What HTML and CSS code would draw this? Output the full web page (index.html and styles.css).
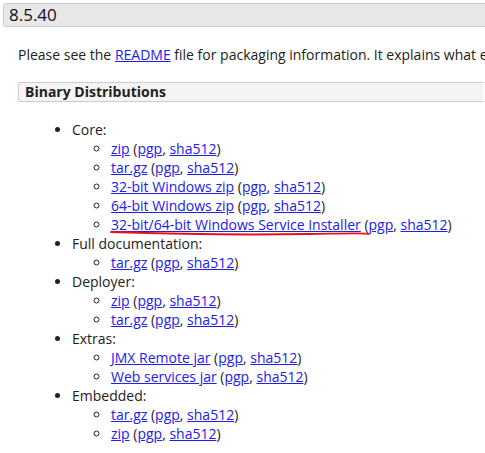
FILE: index.html
```html
<!DOCTYPE html>
<html>
<head>
<meta charset="utf-8">
<link rel="stylesheet" href="styles.css">
</head>
<body>
<div class="page">
  <h3 class="version">8.5.40</h3>
  <div class="section">
    <p class="intro">Please see the <a href="#">README</a> file for packaging information. It explains what every distribution contains.</p>
    <h4 class="subhead">Binary Distributions</h4>
    <ul class="dist">
      <li>Core:
        <ul>
          <li><a href="#">zip</a> (<a href="#">pgp</a>, <a href="#">sha512</a>)</li>
          <li><a href="#">tar.gz</a> (<a href="#">pgp</a>, <a href="#">sha512</a>)</li>
          <li><a href="#">32-bit Windows zip</a> (<a href="#">pgp</a>, <a href="#">sha512</a>)</li>
          <li><a href="#">64-bit Windows zip</a> (<a href="#">pgp</a>, <a href="#">sha512</a>)</li>
          <li class="marked"><a href="#">32-bit/64-bit Windows Service Installer</a> (<a href="#">pgp</a>, <a href="#">sha512</a>)
            <svg class="scribble" width="262" height="8" viewBox="0 0 262 8"><path d="M1 3 C 60 5, 140 6, 200 5 S 250 4, 259 5" fill="none" stroke="#e8101c" stroke-width="1.8" stroke-linecap="round"/></svg>
          </li>
        </ul>
      </li>
      <li>Full documentation:
        <ul>
          <li><a href="#">tar.gz</a> (<a href="#">pgp</a>, <a href="#">sha512</a>)</li>
        </ul>
      </li>
      <li>Deployer:
        <ul>
          <li><a href="#">zip</a> (<a href="#">pgp</a>, <a href="#">sha512</a>)</li>
          <li><a href="#">tar.gz</a> (<a href="#">pgp</a>, <a href="#">sha512</a>)</li>
        </ul>
      </li>
      <li>Extras:
        <ul>
          <li><a href="#">JMX Remote jar</a> (<a href="#">pgp</a>, <a href="#">sha512</a>)</li>
          <li><a href="#">Web services jar</a> (<a href="#">pgp</a>, <a href="#">sha512</a>)</li>
        </ul>
      </li>
      <li>Embedded:
        <ul>
          <li><a href="#">tar.gz</a> (<a href="#">pgp</a>, <a href="#">sha512</a>)</li>
          <li><a href="#">zip</a> (<a href="#">pgp</a>, <a href="#">sha512</a>)</li>
        </ul>
      </li>
    </ul>
  </div>
</div>
</body>
</html>
```
FILE: styles.css
```css
html, body {
  margin: 0;
  padding: 0;
  background: #fff;
  overflow: hidden;
}
body {
  font-family: "Open Sans", "Noto Sans", sans-serif;
  font-size: 14px;
  color: #222;
}
.page {
  padding: 3px 0 0 3px;
  width: 560px;
}
.version {
  margin: 0;
  font-size: 17px;
  font-weight: 400;
  color: #111;
  background: #e8e8e8;
  border: 1px solid #ccc;
  border-radius: 3px 0 0 3px;
  padding: 0 0 0 5px;
  line-height: 22px;
  height: 22px;
}
.section {
  padding-left: 15px;
}
.intro {
  margin: 18px 0 0 0;
  white-space: nowrap;
}
a {
  color: #2020ee;
  text-decoration: underline;
}
.subhead {
  margin: 18px 0 0 0;
  width: 465px;
  box-sizing: border-box;
  font-size: 14px;
  font-weight: 700;
  color: #222;
  background: #f4f4f4;
  border: 1px solid #ccc;
  border-right: none;
  border-radius: 3px 0 0 3px;
  padding: 0 0 0 6px;
  line-height: 18px;
}
.dist {
  margin: 18px 0 0 0;
  padding-left: 54px;
  list-style: disc;
}
.dist ul {
  margin: 0;
  padding-left: 39px;
  list-style: circle;
}
.marked {
  position: relative;
}
.scribble {
  position: absolute;
  left: -1px;
  top: 14px;
}
```
